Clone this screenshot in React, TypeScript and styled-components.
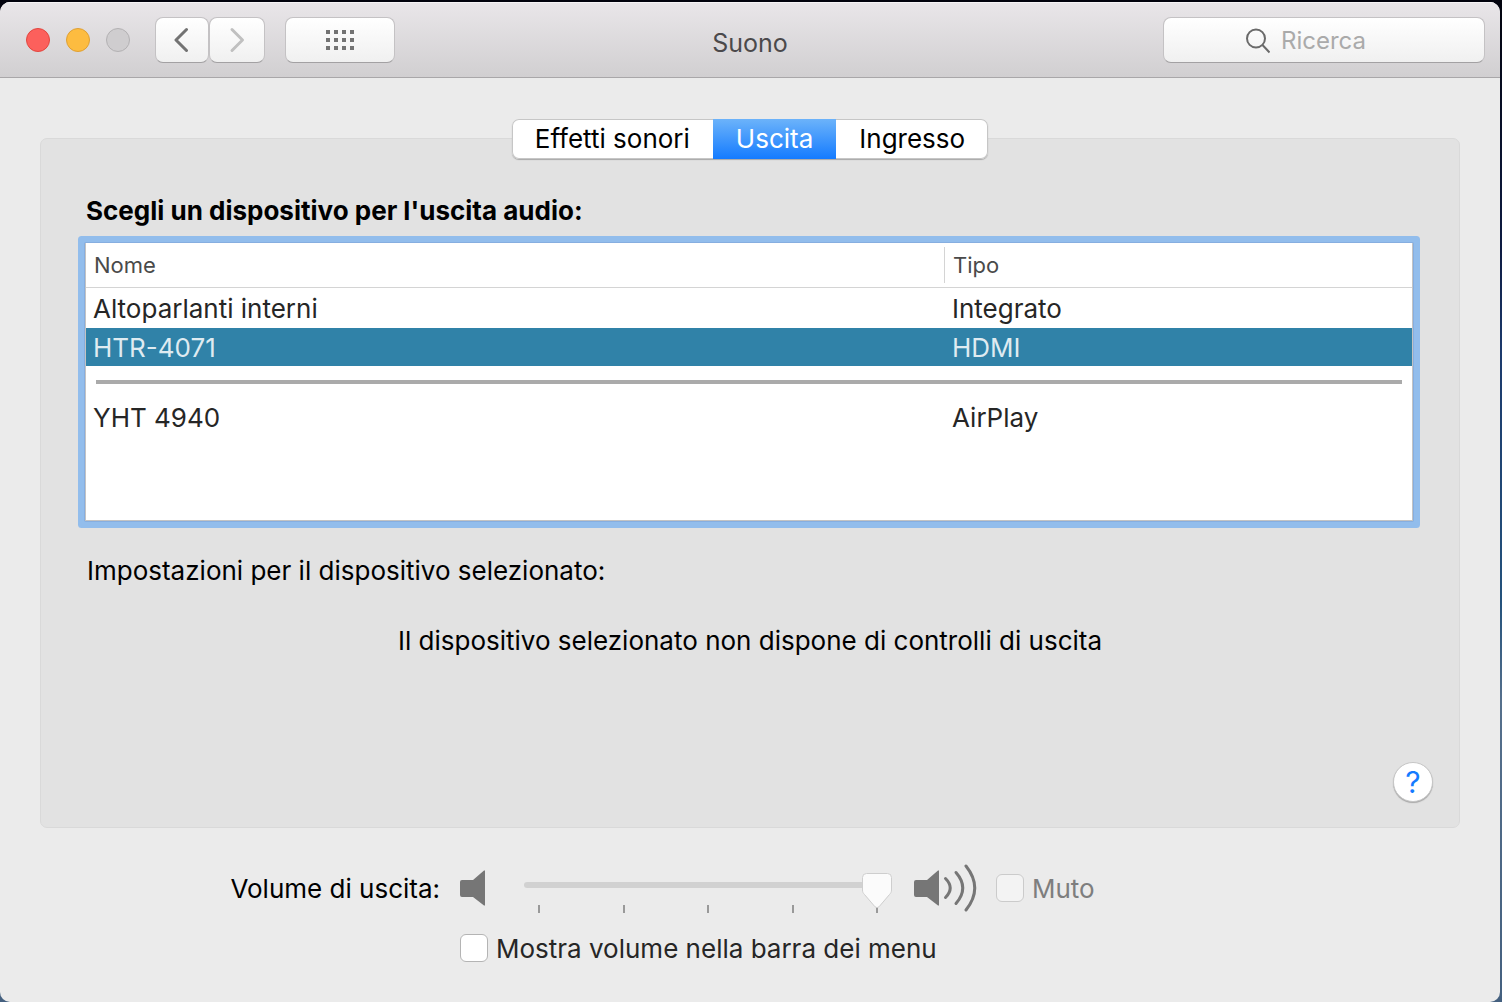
import React, { useState } from "react";
import styled, { createGlobalStyle } from "styled-components";

const GlobalStyle = createGlobalStyle`
  *, *::before, *::after { box-sizing: border-box; }
  body { margin: 0; background: #08112b; }
  body, button, input, table {
    font-family: Inter, Roboto, "Liberation Sans", sans-serif;
    font-size: 26px;
    line-height: 30px;
  }
  button, input { margin: 0; padding: 0; border: 0; background: none; color: inherit; }
  button, input, label { outline: none; }
`;

const Desktop = styled.div`
  min-height: 100vh;
  padding: 2px 2px 0 0;
  display: flex;
  background: linear-gradient(#02030d 0, #0d1b42 25%, #1c3a6c 35%, #24527c 60%, #56708c 70%, #44607f 100%);
`;

const Window = styled.div`
  flex: 1;
  display: flex;
  flex-direction: column;
  border-radius: 10px;
  overflow: hidden;
  background: #ebebeb;
  color: #000;
`;

const TitleBar = styled.header`
  display: grid;
  grid-template-columns: 1fr auto 1fr;
  align-items: center;
  height: 76px;
  padding: 0 15px;
  border-bottom: 1px solid #a9a7a9;
  background: linear-gradient(#e9e6e9, #d1cfd1);
  box-shadow: inset 0 1px 0 #f6f4f6;
`;

const Tools = styled.div`
  display: flex;
  align-items: center;
`;

const Lights = styled.div`
  display: flex;
  gap: 16px;
  margin: 0 25px 0 11px;
`;

const Light = styled.button<{ $fill: string; $edge: string }>`
  width: 24px;
  height: 24px;
  border: 1px solid ${(p) => p.$edge};
  border-radius: 50%;
  background: ${(p) => p.$fill};
`;

const ToolButton = styled.button<{ $width: number; $dim?: boolean }>`
  display: flex;
  align-items: center;
  justify-content: center;
  width: ${(p) => p.$width}px;
  height: 46px;
  border: 1px solid #c4c2c4;
  border-bottom-color: #a3a1a3;
  border-radius: 8px;
  background: linear-gradient(#fff, #f0f0f0);
  color: ${(p) => (p.$dim ? "#c0c0c0" : "#737373")};
`;

const NavGroup = styled.div`
  display: flex;
  margin-right: 20px;
`;

const Title = styled.h1`
  margin: 6px 0 0;
  font-size: 25px;
  font-weight: 400;
  color: #4b494b;
`;

const Search = styled.label`
  justify-self: end;
  display: flex;
  align-items: center;
  gap: 11px;
  width: 322px;
  height: 46px;
  padding: 2px 0 0 81px;
  border: 1px solid #c4c2c4;
  border-bottom-color: #a3a1a3;
  border-radius: 8px;
  background: linear-gradient(#fff, #f0f0f0);
  color: #6a6a6a;
`;

const SearchInput = styled.input`
  flex: 1;
  min-width: 0;
  height: 30px;
  font-size: 24px;
  &::placeholder { color: #aaa; opacity: 1; }
`;

const Content = styled.main`
  display: flex;
  flex-direction: column;
  padding: 41px 40px 0;
`;

const Tabs = styled.div`
  position: relative;
  align-self: center;
  display: flex;
  height: 40px;
  margin-bottom: -21px;
  border-radius: 7px;
  background: #fff;
  box-shadow: inset 0 0 0 1px #c6c6c6, 0 1px 1px #a8a8a8;
`;

const Tab = styled.button<{ $active: boolean }>`
  padding: 0 23px;
  color: ${(p) => (p.$active ? "#fff" : "#000")};
  background: ${(p) => (p.$active ? "linear-gradient(#6cb3fa, #147bff)" : "none")};
`;

const Panel = styled.section`
  display: flex;
  flex-direction: column;
  min-height: 690px;
  padding: 57px 26px 25px 38px;
  border: 1px solid #d9d9d9;
  border-radius: 7px;
  background: #e2e2e2;
`;

const Heading = styled.h2`
  margin: 0 0 17px 7px;
  font-size: 26px;
  font-weight: 700;
`;

const ListBox = styled.div`
  min-height: 278px;
  margin: 0 20px 0 6px;
  border: 1px solid #c3c3c3;
  border-top: 0;
  background: #fff;
  box-shadow: 0 0 0 1px #86aee0, 0 0 0 7px #92bdec;
  border-radius: 1px;
`;

const Table = styled.table`
  width: 100%;
  table-layout: fixed;
  border-collapse: separate;
  border-spacing: 0;
  color: #262626;
`;

const HeadCell = styled.th<{ $width?: number }>`
  width: ${(p) => (p.$width ? p.$width + "px" : "auto")};
  height: 45px;
  padding: 0;
  border-bottom: 1px solid #d4d4d4;
  text-align: left;
  font-size: 22px;
  font-weight: 400;
  color: #4a4a4a;
`;

const HeadLabel = styled.span<{ $divided?: boolean }>`
  display: block;
  padding: 0 8px;
  line-height: 36px;
  border-left: ${(p) => (p.$divided ? "1px solid #d4d4d4" : "0")};
`;

const Row = styled.tr<{ $selected: boolean }>`
  background: ${(p) => (p.$selected ? "#3082a8" : "none")};
  color: ${(p) => (p.$selected ? "#dfebf1" : "inherit")};
  &:first-child td { height: 40px; }
`;

const Cell = styled.td`
  height: 38px;
  padding: 2px 7px 0;
  & + & { padding-left: 8px; }
`;

const RuleCell = styled.td`
  height: 32px;
  padding: 0 10px;
`;

const Rule = styled.hr`
  height: 4px;
  margin: 0;
  border: 0;
  background: #aaa;
`;

const Note = styled.p<{ $center?: boolean }>`
  margin: ${(p) => (p.$center ? "40px 12px 0 0" : "35px 0 0 8px")};
  text-align: ${(p) => (p.$center ? "center" : "left")};
`;

const Help = styled.button`
  align-self: flex-end;
  margin-top: auto;
  width: 40px;
  height: 40px;
  border: 1px solid #c6c6c6;
  border-radius: 50%;
  background: #fff;
  box-shadow: 0 1px 1px #a8a8a8;
  font-size: 30px;
  color: #147bff;
`;

const Footer = styled.div`
  display: grid;
  grid-template-columns: 2fr 5fr;
  align-items: center;
  gap: 20px;
  padding: 35px 0;
`;

const VolumeLabel = styled.label`
  padding-top: 2px;
  text-align: right;
`;

const VolumeRow = styled.div`
  display: flex;
  align-items: center;
  color: #767676;
`;

const SliderBox = styled.div`
  width: 368px;
  margin: 0 22px 0 38px;
  padding-top: 10px;
`;

const thumb = `url("data:image/svg+xml,%3Csvg xmlns='http://www.w3.org/2000/svg' width='32' height='37'%3E%3Cpath d='M5.500 .5h21a4 4 0 0 1 4 4v12.500c0 2-.6 3-2 4.500L18 33.800q-2 1.700-4 0L3.500 21.500c-1.400-1.500-2-2.500-2-4.500V4.500a4 4 0 0 1 4-4z' fill='%23fbfbfb' stroke='%23cecece'/%3E%3C/svg%3E")`;

const Slider = styled.input`
  position: relative;
  z-index: 1;
  display: block;
  width: 100%;
  height: 24px;
  appearance: none;
  &::-webkit-slider-runnable-track {
    height: 6px;
    border-radius: 3px;
    background: #d1d1d1;
  }
  &::-webkit-slider-thumb {
    appearance: none;
    width: 30px;
    height: 36px;
    margin-top: -9px;
    background: ${thumb} center top / 32px 37px no-repeat;
  }
`;

const Ticks = styled.div`
  display: flex;
  justify-content: space-between;
  padding: 8px 14px 0;
`;

const Tick = styled.span`
  width: 2px;
  height: 8px;
  background: #999;
`;

const Check = styled.label<{ $dim?: boolean }>`
  display: flex;
  align-items: center;
  gap: 8px;
  color: ${(p) => (p.$dim ? "#7e7e7e" : "#262626")};
`;

const CheckText = styled.span`
  padding-top: 2px;
  line-height: 28px;
`;

const CheckBox = styled.input`
  flex: none;
  width: 28px;
  height: 28px;
  appearance: none;
  border: 1px solid #b4b4b4;
  border-radius: 6px;
  background: #fff;
  &:checked { background: #147bff; }
  &:disabled { border-color: #cbcbcb; background: #f3f3f3; }
`;

const MenuCheck = styled(Check)`
  grid-column: 2;
`;

const MuteCheck = styled(Check)`
  margin-left: 19px;
`;

const Chevron = ({ flip }: { flip?: boolean }) => (
  <svg width="16" height="26" viewBox="0 0 16 26" fill="none" stroke="currentColor" strokeWidth="3" strokeLinecap="round" strokeLinejoin="round">
    <path d={flip ? "M3 2.500l10.500 10.500L3 23.500" : "M12.500 2.500L2 13 12.500 23.500"} />
  </svg>
);

const GridIcon = () => (
  <svg width="28" height="20" viewBox="0 0 28 20" fill="currentColor" shapeRendering="crispEdges">
    {[0, 8, 16].map((y) => [0, 8, 16, 24].map((x) => <rect key={`${x}-${y}`} x={x} y={y} width="4" height="4" />))}
  </svg>
);

const SearchIcon = () => (
  <svg width="25" height="26" viewBox="0 0 25 26" fill="none" stroke="currentColor" strokeWidth="2">
    <circle cx="11" cy="10.500" r="9" />
    <path d="M17.500 17l7 7.500" />
  </svg>
);

const speaker = "M2 10h11L24 .5h1v35h-1L13 27H2q-2 0-2-2V12q0-2 2-2z";

const SpeakerLow = () => (
  <svg width="26" height="36" viewBox="0 0 26 36" fill="currentColor">
    <path d={speaker} />
  </svg>
);

const SpeakerHigh = () => (
  <svg width="63" height="48" viewBox="0 0 63 48" fill="currentColor">
    <path d={speaker} transform="translate(0 6)" />
    <g fill="none" stroke="currentColor" strokeWidth="3" strokeLinecap="round">
      <path d="M31.500 14.500q9.500 9.500 0 19" />
      <path d="M42 8.500q13.500 15.500 0 31" />
      <path d="M52 2q17.500 22 0 44" />
    </g>
  </svg>
);

const tabNames = ["Effetti sonori", "Uscita", "Ingresso"];

const devices = [
  { name: "Altoparlanti interni", type: "Integrato" },
  { name: "HTR-4071", type: "HDMI" },
  null,
  { name: "YHT 4940", type: "AirPlay" },
];

export default function App() {
  const [tab, setTab] = useState("Uscita");
  const [device, setDevice] = useState("HTR-4071");

  return (
    <>
      <GlobalStyle />
      <Desktop>
        <Window>
          <TitleBar>
            <Tools>
              <Lights>
                <Light $fill="#fc605c" $edge="#e2463f" aria-label="Chiudi" />
                <Light $fill="#fdbc40" $edge="#dfa034" aria-label="Riduci" />
                <Light $fill="#cfcdcf" $edge="#b3b1b3" aria-label="Ingrandisci" disabled />
              </Lights>
              <NavGroup>
                <ToolButton $width={54} aria-label="Indietro"><Chevron /></ToolButton>
                <ToolButton $width={56} $dim disabled aria-label="Avanti"><Chevron flip /></ToolButton>
              </NavGroup>
              <ToolButton $width={110} aria-label="Mostra tutto"><GridIcon /></ToolButton>
            </Tools>
            <Title>Suono</Title>
            <Search>
              <SearchIcon />
              <SearchInput type="text" placeholder="Ricerca" aria-label="Ricerca" />
            </Search>
          </TitleBar>

          <Content>
            <Tabs role="tablist">
              {tabNames.map((name) => (
                <Tab key={name} role="tab" aria-selected={tab === name} $active={tab === name} onClick={() => setTab(name)}>
                  {name}
                </Tab>
              ))}
            </Tabs>

            <Panel>
              <Heading>Scegli un dispositivo per l'uscita audio:</Heading>
              <ListBox>
                <Table>
                  <thead>
                    <tr>
                      <HeadCell scope="col"><HeadLabel>Nome</HeadLabel></HeadCell>
                      <HeadCell scope="col" $width={468}><HeadLabel $divided>Tipo</HeadLabel></HeadCell>
                    </tr>
                  </thead>
                  <tbody>
                    {devices.map((d, i) =>
                      d ? (
                        <Row key={i} $selected={d.name === device} onClick={() => setDevice(d.name)}>
                          <Cell>{d.name}</Cell>
                          <Cell>{d.type}</Cell>
                        </Row>
                      ) : (
                        <tr key={i}><RuleCell colSpan={2}><Rule /></RuleCell></tr>
                      )
                    )}
                  </tbody>
                </Table>
              </ListBox>
              <Note>Impostazioni per il dispositivo selezionato:</Note>
              <Note $center>Il dispositivo selezionato non dispone di controlli di uscita</Note>
              <Help aria-label="Aiuto">?</Help>
            </Panel>

            <Footer>
              <VolumeLabel htmlFor="volume">Volume di uscita:</VolumeLabel>
              <VolumeRow>
                <SpeakerLow />
                <SliderBox>
                  <Slider id="volume" type="range" min={0} max={100} defaultValue={100} />
                  <Ticks>{[0, 1, 2, 3, 4].map((n) => <Tick key={n} />)}</Ticks>
                </SliderBox>
                <SpeakerHigh />
                <MuteCheck $dim><CheckBox type="checkbox" disabled /><CheckText>Muto</CheckText></MuteCheck>
              </VolumeRow>
              <MenuCheck><CheckBox type="checkbox" /><CheckText>Mostra volume nella barra dei menu</CheckText></MenuCheck>
            </Footer>
          </Content>
        </Window>
      </Desktop>
    </>
  );
}
